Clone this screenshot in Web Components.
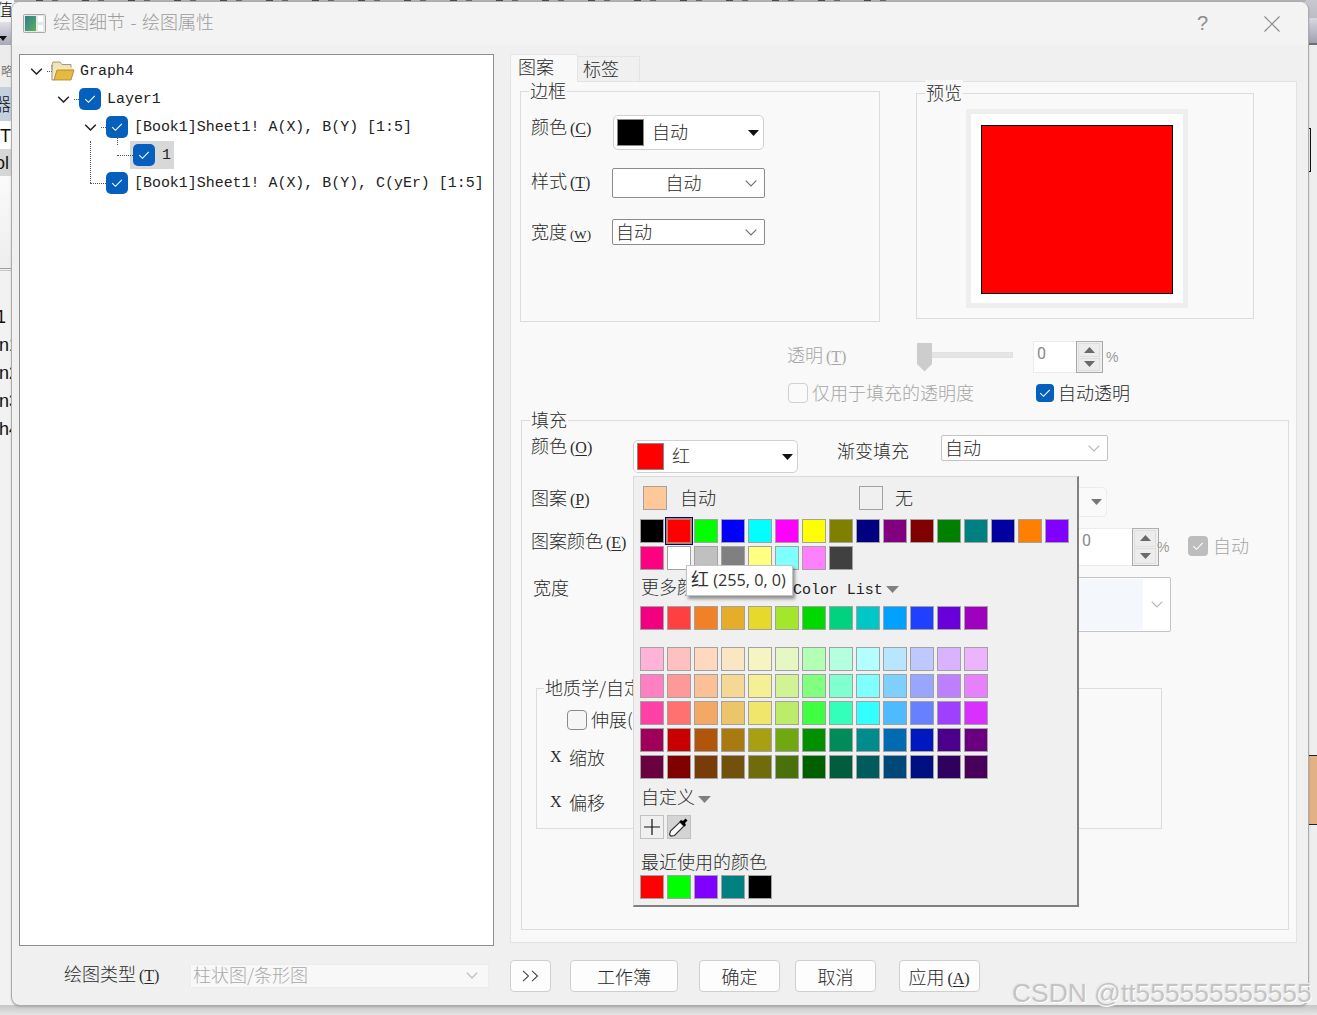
<!DOCTYPE html>
<html lang="zh-CN">
<head>
<meta charset="utf-8">
<title>绘图细节 - 绘图属性</title>
<style>
html,body{margin:0;padding:0;width:1317px;height:1015px;overflow:hidden;background:#ececec;
font-family:"Noto Sans CJK SC","Liberation Sans",sans-serif;font-size:18px;font-weight:300;color:#222;}
</style>
</head>
<body>
<x-backdrop></x-backdrop>
<x-dialog></x-dialog>
<x-watermark>CSDN @tt555555555555</x-watermark>
<script>
function def(name, css, html, init){
  customElements.define(name, class extends HTMLElement{
    connectedCallback(){
      if(this.shadowRoot) return;
      const r=this.attachShadow({mode:'open'});
      r.innerHTML='<style>'+css+'</style>'+(typeof html==='function'?html(this):html);
      if(init) init(this,r);
    }
  });
}
const chev=(c,w=12,h=7,s=1.2)=>`<svg width="${w}" height="${h}" viewBox="0 0 12 7" style="display:block;flex:none"><path d="M.7.7 6 6l5.3-5.3" fill="none" stroke="${c}" stroke-width="${s}"/></svg>`;
const tri=(c,w=11,h=6,mt=0)=>`<svg width="${w}" height="${h}" viewBox="0 0 11 6" style="display:block;flex:none;margin-top:${mt}px"><path d="M0 0h11L5.5 6z" fill="${c}"/></svg>`;

def('x-backdrop',`
:host{display:block;position:absolute;inset:0;overflow:hidden;background:#eeeeee;font-family:"Liberation Sans","Noto Sans CJK SC",sans-serif;font-size:18px;color:#111}
.p{position:absolute;left:0;overflow:hidden}
.t{position:absolute;white-space:nowrap}
.ticks{position:absolute;left:36px;top:0;width:850px;height:2px;background:#b4b4b8 repeating-linear-gradient(90deg,#4a4a4a 0 7px,#b4b4b8 7px 16px,#666 16px 22px,#b4b4b8 22px 46px)}
.topband{position:absolute;left:0;right:0;top:0;height:2px;background:#b4b4b8}
.right{position:absolute;left:1306px;width:11px;overflow:hidden}
.b{position:absolute;left:0;right:0;bottom:0;height:10px;background:linear-gradient(#c6c6c6,#e4e4e4)}
`,`
<div class="topband"></div><div class="ticks"></div>
<div class="p" style="top:0;width:14px;height:22px;background:#f6f6f6"><span class="t" style="left:-4px;top:-4px;font-size:17px;font-family:'Noto Sans CJK SC'">值(F</span></div>
<div class="p" style="top:22px;width:14px;height:23px;background:linear-gradient(#e0e0e8,#a8a8b8)"><svg width="8" height="5" style="position:absolute;left:-1px;top:14px"><path d="M0 0h8L4 5z" fill="#111"/></svg></div>
<div class="p" style="top:45px;width:14px;height:42px;background:#ececec"><span class="t" style="left:1px;top:19px;font-size:12px;font-family:'Noto Sans CJK SC';color:#555;line-height:14px">略</span></div>
<div class="p" style="top:87px;width:14px;height:34px;background:#c4d0de"><span class="t" style="left:-7px;top:3px;font-size:18px;font-family:'Noto Sans CJK SC';line-height:26px">器</span></div>
<div class="p" style="top:121px;width:14px;height:28px;background:#fff"><span class="t" style="left:0;top:2px;line-height:26px">TI</span></div>
<div class="p" style="top:149px;width:14px;height:27px;background:#d6d6d6"><span class="t" style="left:-5px;top:1px;line-height:26px">ol</span></div>
<div class="p" style="top:176px;width:14px;height:92px;background:linear-gradient(#fafafa,#eee)"></div>
<div class="p" style="top:268px;width:14px;height:3px;border-top:1px solid #a0a0a0;border-bottom:1px solid #c8c8c8;box-sizing:border-box"></div>
<div class="p" style="top:271px;width:14px;height:734px;background:#f2f2f2">
 <span class="t" style="left:-4px;top:33px;line-height:26px">1</span>
 <span class="t" style="left:-1px;top:61px;line-height:26px">n1</span>
 <span class="t" style="left:-1px;top:89px;line-height:26px">n2</span>
 <span class="t" style="left:-1px;top:117px;line-height:26px">n3</span>
 <b class="t" style="left:-1px;top:145px;line-height:26px">h4</b>
</div>
<div class="right" style="top:0;height:18px;background:linear-gradient(#c8c8d0,#bcbcc4)"></div>
<div class="right" style="top:18px;height:27px;background:linear-gradient(#d8d8e2,#a0a0b2);border-bottom:2px solid #707070;box-sizing:border-box"></div>
<div class="right" style="top:128px;width:5px;height:44px;border:1px solid #111;box-sizing:border-box"></div>
<div class="right" style="top:755px;height:70px;background:#e2b186;border-top:1px solid #222;border-bottom:1px solid #222;box-sizing:border-box"></div>
<div class="b"></div>
`);

def('x-watermark',`:host{display:block;position:absolute;left:1012px;top:976px;font:26.4px/34px "Liberation Sans",sans-serif;color:#c4c4c4;white-space:nowrap;text-shadow:1px 1px 0 #fff,-1px -1px 0 #e8e8e8,1px -1px 0 #eee,-1px 1px 0 #eee;}`,`<slot></slot>`);

def('x-label',`
:host{display:block;white-space:nowrap;height:22px;line-height:20px;font-size:18px;color:#2a2a2a;text-indent:-1px}
:host([disabled]){color:#a6a6a6}
.l{font:16px/20px "Liberation Serif",serif;margin-left:3px}
.w{font-size:13px}
u{text-underline-offset:2px;text-decoration-thickness:1px}
`,h=>{const k=h.getAttribute('key');return `<slot></slot>${k?`<span class="l${k==='W'?' w':''}">(<u>${k}</u>)</span>`:''}`});

def('x-check',`
:host{display:inline-flex;align-items:center;gap:var(--check-gap,4px);white-space:nowrap;font-size:18px;line-height:22px;color:#2a2a2a}
.b{box-sizing:border-box;width:var(--check-size,20px);height:var(--check-size,20px);border-radius:var(--check-radius,4px);flex:none;display:flex;align-items:center;justify-content:center}
:host([state=on]) .b{background:#0560bd}
:host([state=gray]) .b{background:#bdbdbd}
:host([state=off]) .b{border:1px solid #d0d0d0;background:#fafafa}
:host([state=off-dark]) .b{border:1px solid #8a8a8a;background:#f5f5f5}
:host([muted]){color:#a6a6a6}
.s{margin-top:-2px}
svg{display:block}
`,h=>{const s=h.getAttribute('state');const mark=(s==='on'||s==='gray')?`<svg width="12" height="10" viewBox="0 0 12 10"><path d="M1.2 5.2 4.5 8.3 10.8 1.8" fill="none" stroke="#fff" stroke-width="1.1"/></svg>`:'';return `<span class="b">${mark}</span>${h.textContent.trim()?'<span class="s"><slot></slot></span>':''}`});

def('x-tree-item',`
:host{display:flex;align-items:center;height:28px;position:relative;padding-left:calc(8px + var(--lv) * 27px);white-space:nowrap;font:14.95px/28px "Liberation Mono",monospace;color:#222}
.cv{width:16px;flex:none;display:flex;justify-content:center}
.ic{margin-left:8px;flex:none;display:flex;position:relative;--check-size:22px;--check-radius:5px}
.tx{margin-left:6px;position:relative}
.sel{position:absolute;left:-3px;top:-3px;height:28px;background:#d8d8d8;width:44px;}
.dot{position:absolute;border:0 dotted #555}
`,h=>{
  const lv=+h.getAttribute('level');h.style.setProperty('--lv',lv);
  const has=h.hasAttribute('open');const sel=h.hasAttribute('selected');
  const folder=h.hasAttribute('folder');
  const icon=folder?`<svg width="24" height="22" viewBox="0 0 24 22" style="margin-left:-1px"><path d="M1 4.5 2 2h7l2 2.5h9v5H1z" fill="#efe3b8" stroke="#8f8469" stroke-width=".8"/><path d="M1 7h18l4 2-3 11H3z" fill="#f4e7b0"/><path d="M3 20 6 10h17l-3 10z" fill="#e9b93e" stroke="#a08035" stroke-width=".8"/><path d="M1 5v15h2" fill="none" stroke="#8a8a7e"/></svg>`:`<x-check state="on"></x-check>`;
  const dots=h.getAttribute('dots')||'';
  let d='';
  if(dots==='child') d=`<i class="dot" style="left:-16px;top:-13px;height:14px;border-left-width:1px"></i><i class="dot" style="left:-16px;top:11px;width:16px;border-top-width:1px"></i>`;
  if(dots==='last') d=`<i class="dot" style="left:-16px;top:-31px;height:42px;border-left-width:1px"></i><i class="dot" style="left:-16px;top:11px;width:16px;border-top-width:1px"></i>`;
  if(dots==='stub') d=`<i class="dot" style="left:-5px;top:11px;width:5px;border-top-width:1px"></i>`;
  return `<span class="cv">${has?chev('#222',13,7,1.5):''}</span>
  <span class="ic">${sel?'<span class="sel"></span>':''}${d}<span style="position:relative;display:flex">${icon}</span></span>
  <span class="tx" style="${folder?'margin-left:5px':''}${h.hasAttribute('tight')?'margin-left:6px':''}${sel?'margin-left:7px':''}"><slot></slot></span>`;
});

def('x-tree',`
:host{display:block;box-sizing:border-box;width:475px;height:892px;background:#fff;border:1px solid #8e8e8e;padding-top:2px;flex:none}
`,`
<x-tree-item level="0" open folder dots="stub">Graph4</x-tree-item>
<x-tree-item level="1" open dots="stub">Layer1</x-tree-item>
<x-tree-item level="2" open dots="stub" tight>[Book1]Sheet1! A(X), B(Y) [1:5]</x-tree-item>
<x-tree-item level="3" selected dots="child">1</x-tree-item>
<x-tree-item level="2" dots="last" tight>[Book1]Sheet1! A(X), B(Y), C(yEr) [1:5]</x-tree-item>
`);

def('x-group',`
:host{display:block;box-sizing:border-box;position:relative;border:1px solid #dcdcdc}
.lg{position:absolute;left:var(--lg-x,8px);top:-14px;padding:0 1px;background:#f9f9f9;line-height:24px;font-size:18px;color:#2a2a2a;white-space:nowrap}
`,h=>`<span class="lg">${h.getAttribute('legend')}</span><slot></slot>`);

def('x-combo',`
:host{display:flex;align-items:center;box-sizing:border-box;background:#fff;border:1px solid #8c8c8c;border-radius:2px;font-size:18px;color:#2a2a2a;position:relative;white-space:nowrap}
:host([kind=color]){border-color:#d0d0d0;border-radius:5px}
:host([kind=off]){border-color:#ececec;border-radius:5px;background:#fafafa}
:host([kind=soft]){border-color:#c4c4c4}
:host([kind=ro]){border-color:#ececec;background:#f8f8f8;color:#a8a8a8;border-radius:1px}
.sw{width:27px;height:27px;box-sizing:border-box;border:1px solid #8a8a8a;margin-left:3px;flex:none}
.tx{flex:1;padding-left:3px;min-width:0;overflow:hidden;margin-top:-3px;line-height:24px}
:host([kind=color]) .tx{padding-left:8px}
:host([kind=ro]) .tx{padding-left:2px;margin-top:-3px}
:host([center]) .tx{text-align:center;padding-left:9px;margin-top:-3px}
.well{position:absolute;left:0;top:1px;bottom:1px;right:27px;background:#f4f8fc}
`,h=>{
  const k=h.getAttribute('kind');const c=h.getAttribute('swatch');
  const ar=(k==='color')?tri('#111',11,6):k==='off'?tri('#777',11,6):(k==='soft'||k==='ro')?chev('#b8b8b8'):chev('#707070');
  const mr={color:4,soft:7,ro:10,off:4}[k]||7;
  return `${h.hasAttribute('well')?'<span class="well"></span>':''}${c?`<span class="sw" style="background:${c}"></span>`:''}<span class="tx"><slot></slot></span><span style="margin-right:${mr}px;flex:none">${ar}</span>`;
});

def('x-spin',`
:host{display:flex;box-sizing:border-box;align-items:stretch;background:#fff;border:1px solid #ececec;border-right:0;font:16px "Roboto",sans-serif;color:#8a8a8a}
.v{flex:1;padding:2px 0 0 3px;line-height:20px;text-align:var(--spin-align,left)}
.b{width:27px;flex:none;box-sizing:border-box;border:1px solid #a8a8a8;border-top-color:#b0b0b0;background:#efefef;padding:1px 2px 1px 1px;display:flex;flex-direction:column;gap:1px;margin:-1px 0}
.b i{flex:1;display:flex;align-items:center;justify-content:center;background:#ececec;border:1px solid #dedede}
`,h=>`<span class="v" style="padding-left:${h.getAttribute('pad')||3}px">0</span><span class="b"><i><svg width="11" height="6"><path d="M0 6h11L5.5 0z" fill="#6a6a6a"/></svg></i><i><svg width="11" height="6"><path d="M0 0h11L5.5 6z" fill="#6a6a6a"/></svg></i></span>`);

def('x-slider',`
:host{display:block;position:relative;width:96px;height:32px;flex:none}
.track{position:absolute;left:0;right:0;top:11px;height:6px;background:#e4e6e4;border:1px solid #e0e2e0;box-sizing:border-box}
svg{position:absolute;left:0;top:2px}
`,`<div class="track"></div><svg width="16" height="30"><path d="M0 0h15v21l-7.5 7.5L0 21z" fill="#cdcdcd"/></svg>`);

def('x-preview',`
:host{display:block;box-sizing:border-box;border:5px solid #eeeeee;background:#fff;width:222px;height:199px;padding:11px 10px 9px}
div{box-sizing:border-box;width:192px;height:169px;background:#f00;border:1px solid #000}
`,`<div></div>`);

def('x-swatch',`
:host{display:block;box-sizing:border-box;width:24px;height:24px;border:1px solid #a2a2a2;position:relative;background:var(--c);flex:none}
:host([selected]){outline:1px solid #000078;outline-offset:1px;border-color:#c47a60;box-shadow:0 0 0 1px #b08478}
`,h=>{h.style.setProperty('--c',h.getAttribute('c'));return ''});

def('x-tooltip',`
:host{display:block;position:absolute;left:52px;top:88px;box-sizing:border-box;width:107px;height:31px;background:#fff;border:1px solid #c4c4c4;box-shadow:2px 3px 3px rgba(0,0,0,.4);font:16.2px/27px "Open Sans","Noto Sans CJK SC",sans-serif;color:#333;padding-left:4px;white-space:nowrap;z-index:2}
`,`<slot></slot>`);

const P1='#000000 #ff0000 #00ff00 #0000ff #00ffff #ff00ff #ffff00 #808000 #000080 #800080 #800000 #008000 #008080 #0000a0 #ff8000 #8000ff #ff0080 #ffffff #c0c0c0 #808080 #ffff80 #80ffff #ff80ff #404040'.split(' ');
const P2='#f2007f #ff4040 #f28024 #e6ad2b #e6d92b #a3e62b #00d900 #00d27f #00c7c7 #00a0ff #2040ff #6a00d9 #a000c0'.split(' ');
const P3=('#ffb3d9 #ffc0c0 #ffd9bf #fae6c3 #f7f4c3 #e6f7c3 #b3ffb3 #b3ffe0 #b3ffff #b8e6ff #bfc8ff #d9b3ff #ecb3ff '+
 '#ff80c0 #ff9999 #fbc095 #f5d896 #f5ef96 #d2f296 #80ff80 #80ffd0 #80ffff #80d0ff #99a6ff #bf80ff #e680ff '+
 '#ff40a6 #ff7070 #f5a866 #ecc56a #f0e66c #bcec6a #40ff40 #33ffbb #33ffff #50baff #6680ff #a040ff #d930ff '+
 '#a0005a #c80000 #b0550a #a87a10 #a8a010 #6fa810 #009000 #008c5a #008c8c #006bb0 #0018c0 #4b008c #6a0080 '+
 '#6a0040 #800000 #783c08 #70520c #706c0c #4a700c #006000 #005c3c #005c5c #00477a #001080 #30005f #48005a').split(' ');
const sw=(a,sel)=>a.map((c,i)=>`<x-swatch c="${c}"${sel===i?' selected':''}></x-swatch>`).join('');

def('x-palette',`
:host{display:block;position:absolute;left:122px;top:394px;box-sizing:border-box;width:446px;height:431px;background:#f0f0f0;border:1px solid #dadada;border-right:2px solid #808080;border-bottom:2px solid #808080;padding:9px 0 0 6px;font-size:18px;color:#2a2a2a;z-index:1}
.auto{display:flex;height:24px;align-items:center;padding-left:3px;line-height:22px}
.auto span{margin:-2px 0 0 13px}
.auto .m{margin-left:12px}
.g{display:grid;grid-template-columns:repeat(16,24px);gap:3px;}
.g13{grid-template-columns:repeat(13,24px)}
.more{display:flex;align-items:center;height:26px;margin-top:3px;line-height:26px;padding-left:1px;white-space:nowrap}
.more b{font:14.95px/26px "Liberation Mono",monospace;margin:7px 0 0 80px;color:#222}
.cus{display:flex;align-items:center;height:24px;margin-top:5px;padding-left:1px;line-height:24px}
.tools{display:flex;gap:3px;margin-top:7px}
.tools span{box-sizing:border-box;width:24px;height:24px;border:1px solid #c0c0c0;display:flex;align-items:center;justify-content:center}
.rec{line-height:24px;height:24px;margin-top:10px;padding-left:1px;white-space:nowrap}
`,`
<div class="auto"><x-swatch c="#ffc898"></x-swatch><span>自动</span><x-swatch c="#f0f0f0" style="margin-left:143px"></x-swatch><span class="m">无</span></div>
<div class="g" style="margin-top:9px">${sw(P1,1)}</div>
<div class="more">更多颜色<b>Color List</b><span style="margin-left:3px">${tri('#808080',13,7,6)}</span></div>
<div class="g g13" style="margin-top:7px">${sw(P2)}</div>
<div class="g g13" style="margin-top:17px">${sw(P3)}</div>
<div class="cus">自定义<span style="margin-left:3px">${tri('#808080',13,7,6)}</span></div>
<div class="tools"><span><svg width="18" height="18" viewBox="0 0 18 18"><path d="M9 1v16M1 9h16" stroke="#111" stroke-width="1.2" fill="none"/></svg></span><span style="background:#d4d4d4"><svg width="22" height="22" viewBox="0 0 22 22"><path d="M3 20 1.500 18.500 2.500 15 12 6 16 10 6.500 19.500z" fill="#fff" stroke="#333" stroke-width="1.2"/><path d="M11.500 5.500 16.500 10.500 18 9l-1-2 2.500-2.500L17.500 2.500 15 5l-2-1z" fill="#000"/></svg></span></div>
<div class="rec">最近使用的颜色</div>
<div class="g" style="margin-top:2px;grid-template-columns:repeat(5,24px)">${sw(['#ff0000','#00ff00','#8000ff','#008080','#000000'])}</div>
<x-tooltip><span style="font-size:18px">红</span> (255, 0, 0)</x-tooltip>
`);

def('x-pattern-page',`
:host{display:block;box-sizing:border-box;height:100%;position:relative;font-size:18px;padding-top:9px}
.top{display:flex;margin:0 0 0 9px;align-items:flex-start}
.g1{width:360px;height:231px;padding:23px 0 0 11px}
.g2{width:338px;height:226px;margin:2px 0 0 36px;padding:15px 0 0 49px;--lg-x:8px}
.fr{display:flex;align-items:flex-start}
.fr x-label{width:80px}
.g1 .fr+.fr{margin-top:18px}
.tr{display:flex;align-items:center;margin:19px 0 0 277px;height:32px}
.tr2{display:grid;grid-template-columns:248px auto;margin:9px 0 0 277px;height:21px;align-items:center}
.fill{width:768px;height:510px;margin:17px 0 0 10px;padding:14px 0 0 10px;--lg-x:8px}
.row{display:flex;align-items:flex-start}
.sub{width:626px;height:141px;margin:56px 0 0 4px;padding:20px 0 0 13px;--lg-x:7px;border-color:#dcdcdc}
.x{display:flex;white-space:nowrap;line-height:22px;color:#2a2a2a}
.x b{font:400 16px/22px "Liberation Serif",serif;width:19px}
.pc{font:14px "Liberation Sans",sans-serif;color:#9a9a9a}
`,`
<div class="top">
 <x-group class="g1" legend="边框">
  <div class="fr"><x-label key="C" style="margin-top:1px">颜色</x-label><x-combo kind="color" swatch="#000" style="width:151px;height:35px;margin-left:1px">自动</x-combo></div>
  <div class="fr"><x-label key="T" style="margin-top:2px">样式</x-label><x-combo center style="width:153px;height:30px">自动</x-combo></div>
  <div class="fr" style="margin-top:21px"><x-label key="W" style="margin-top:2px">宽度</x-label><x-combo style="width:153px;height:26px">自动</x-combo></div>
 </x-group>
 <x-group class="g2" legend="预览"><x-preview></x-preview></x-group>
</div>
<div class="tr">
 <x-label key="T" disabled style="width:129px;margin-top:-4px">透明</x-label><x-slider></x-slider>
 <x-spin style="width:70px;height:32px;margin-left:20px"></x-spin><span class="pc" style="margin:-1px 0 0 3px">%</span>
</div>
<div class="tr2">
 <x-check state="off" muted>仅用于填充的透明度</x-check>
 <x-check state="on" style="--check-gap:4px;--check-size:18px">自动透明</x-check>
</div>
<x-group class="fill" legend="填充">
 <div class="row" style="height:38px">
  <x-label key="O" style="width:101px">颜色</x-label>
  <x-combo kind="color" swatch="#f00" style="width:165px;height:33px;margin-top:5px">红</x-combo>
  <x-label style="width:103px;margin:5px 0 0 40px">渐变填充</x-label>
  <x-combo kind="soft" style="width:167px;height:26px">自动</x-combo>
 </div>
 <div class="row" style="height:30px;margin-top:14px">
  <x-label key="P" style="width:101px">图案</x-label>
  <x-combo kind="off" style="width:474px;height:30px"></x-combo>
 </div>
 <div class="row" style="height:38px;margin-top:11px">
  <x-label key="E" style="width:101px;margin-top:2px">图案颜色</x-label>
  <x-spin pad="448" style="width:526px;height:38px"></x-spin>
  <span class="pc" style="margin:11px 0 0 -2px;width:10px">%</span>
  <x-check state="gray" muted style="margin:8px 0 0 21px;--check-gap:5px">自动</x-check>
 </div>
 <div class="row" style="height:55px;margin-top:11px">
  <x-label style="width:99px;margin-left:2px">宽度</x-label>
  <x-combo kind="soft" well style="width:538px;height:55px"></x-combo>
 </div>
 <x-group class="sub" legend="地质学/自定义">
  <div style="padding-left:17px"><x-check state="off-dark">伸展(S)</x-check></div>
  <div class="x" style="margin-top:11px"><b>X</b>缩放</div>
  <div class="x" style="margin-top:23px"><b>X</b>偏移</div>
 </x-group>
</x-group>
<x-palette></x-palette>
`);

def('x-tabs',`
:host{display:flex;flex-direction:column;box-sizing:border-box;width:787px;height:889px;margin-left:16px;font-size:18px;color:#2a2a2a}
.h{display:flex;height:27px;align-items:flex-end;position:relative;z-index:1}
.t{box-sizing:border-box;border:1px solid #e4e4e4;border-bottom:0;white-space:nowrap}
.a{width:68px;height:28px;margin-bottom:-1px;background:#f9f9f9;padding-left:7px;line-height:23px}
.b{width:62px;height:25px;background:#f0f0f0;padding-left:5px;line-height:23px;border-left:0}
.p{flex:1;box-sizing:border-box;background:#f9f9f9;border:1px solid #e2e2e2;min-height:0}
`,`<div class="h"><div class="t a">图案</div><div class="t b">标签</div></div><div class="p"><slot></slot></div>`);

def('x-button',`
:host{display:flex;align-items:center;justify-content:center;box-sizing:border-box;height:32px;background:#fdfdfd;border:1px solid #cfcfcf;border-radius:4px;font-size:18px;color:#2a2a2a;white-space:nowrap;flex:none}
`,`<slot></slot>`);

def('x-titlebar',`
:host{display:flex;align-items:center;height:43px;background:#f3f3f3;box-sizing:border-box;padding-left:11px;flex:none;border-radius:8px 8px 0 0}
.t{margin:-6px 0 0 7px;color:#9c9c9c;font-size:18px;white-space:nowrap;word-spacing:1.5px}
.q{margin-left:auto;width:16px;color:#8c8c8c;font:20px "Liberation Sans",sans-serif}
.c{margin:0 28px 0 51px;display:block}
`,`<svg width="23" height="19" viewBox="0 0 23 19" style="margin-top:-1px"><rect x=".5" y=".5" width="22" height="18" rx="1" fill="#e8e8e8" stroke="#a8a8a8"/><defs><linearGradient id="g" x1="0" y1="0" x2="1" y2="1"><stop offset="0" stop-color="#2b7f8e"/><stop offset="1" stop-color="#5fae5c"/></linearGradient></defs><rect x="2" y="2" width="11" height="15" fill="url(#g)"/><rect x="15" y="2" width="5" height="6" fill="#fff"/><rect x="15" y="11" width="5" height="6" fill="#fff"/></svg>
<span class="t">绘图细节 - 绘图属性</span><span class="q">?</span>
<svg class="c" width="16" height="16" viewBox="0 0 16 16"><path d="M.5.5l15 15M15.500.5l-15 15" stroke="#8a8a8a" stroke-width="1.2" fill="none"/></svg>`);

def('x-footer',`
:host{display:flex;align-items:center;height:59px;box-sizing:border-box;padding:0 0 0 53px;flex:none}
`,`
<x-label key="T" style="width:125px;margin-top:-3px">绘图类型</x-label>
<x-combo kind="ro" style="width:299px;height:24px">柱状图/条形图</x-combo>
<x-button style="width:41px;margin-left:21px"><svg width="18" height="12" viewBox="0 0 18 12"><path d="M1 .8 6.500 6 1 11.200M10 .8 15.500 6 10 11.200" fill="none" stroke="#444" stroke-width="1.1"/></svg></x-button>
<x-button style="width:108px;margin-left:19px">工作簿</x-button>
<x-button style="width:81px;margin-left:21px">确定</x-button>
<x-button style="width:81px;margin-left:15px">取消</x-button>
<x-button style="width:81px;margin-left:23px"><x-label key="A" style="margin-top:2px">应用</x-label></x-button>
`);

def('x-dialog',`
:host{display:flex;flex-direction:column;position:absolute;left:12px;top:2px;width:1296px;height:1003px;background:#f0f0f0;border-radius:8px;box-shadow:0 0 0 1px #acacac,0 1px 3px rgba(0,0,0,.35)}
.main{display:flex;flex:1;min-height:0;padding:9px 0 0 7px}
`,`
<x-titlebar></x-titlebar>
<div class="main"><x-tree></x-tree><x-tabs><x-pattern-page></x-pattern-page></x-tabs></div>
<x-footer></x-footer>
`);
</script>
</body>
</html>
